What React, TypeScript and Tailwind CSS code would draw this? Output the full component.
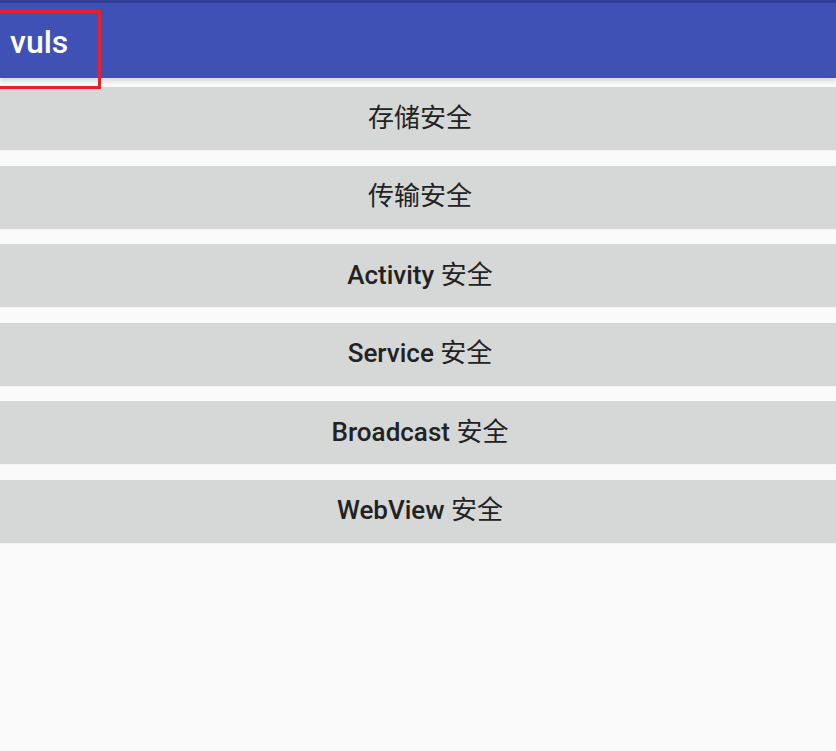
import React from "react"

// latin part is medium, CJK part is regular like the reference
const items = [
  { en: "", zh: "存储安全" },
  { en: "", zh: "传输安全" },
  { en: "Activity ", zh: "安全" },
  { en: "Service ", zh: "安全" },
  { en: "Broadcast ", zh: "安全" },
  { en: "WebView ", zh: "安全" },
]

export default function App() {
  return (
    <div
      className="relative min-h-[751px] w-full overflow-hidden bg-[#fafafa]"
      style={{ fontFamily: 'Roboto, "Noto Sans CJK SC", sans-serif' }}
    >
      {/* status strip + toolbar */}
      <div className="h-[3px] bg-[#33409a]" />
      <header className="flex h-[75px] items-center bg-[#3f51b5] pl-[10px] shadow-[0_3px_5px_rgba(0,0,0,0.15)]">
        <span className="pt-[3px] text-[32px] font-medium leading-none text-white">vuls</span>
      </header>

      {/* button list */}
      <div className="flex flex-col gap-[17.6px] pt-[9px]">
        {items.map((item) => (
          <button
            key={item.en + item.zh}
            className="-mx-1 flex h-[61px] items-center justify-center bg-[#d6d7d7] text-[26px] text-[#222222] shadow-[0_2px_1px_rgba(0,0,0,0.14)]"
          >
            <span className="pl-[4px] pt-[1px]">
              {item.en && <span className="font-medium">{item.en}</span>}
              <span className="font-normal">{item.zh}</span>
            </span>
          </button>
        ))}
      </div>

      {/* red highlight box */}
      <div className="absolute left-[-4px] top-[10px] h-[79px] w-[105px] border-[3px] border-[#e8202a]" />
    </div>
  )
}
